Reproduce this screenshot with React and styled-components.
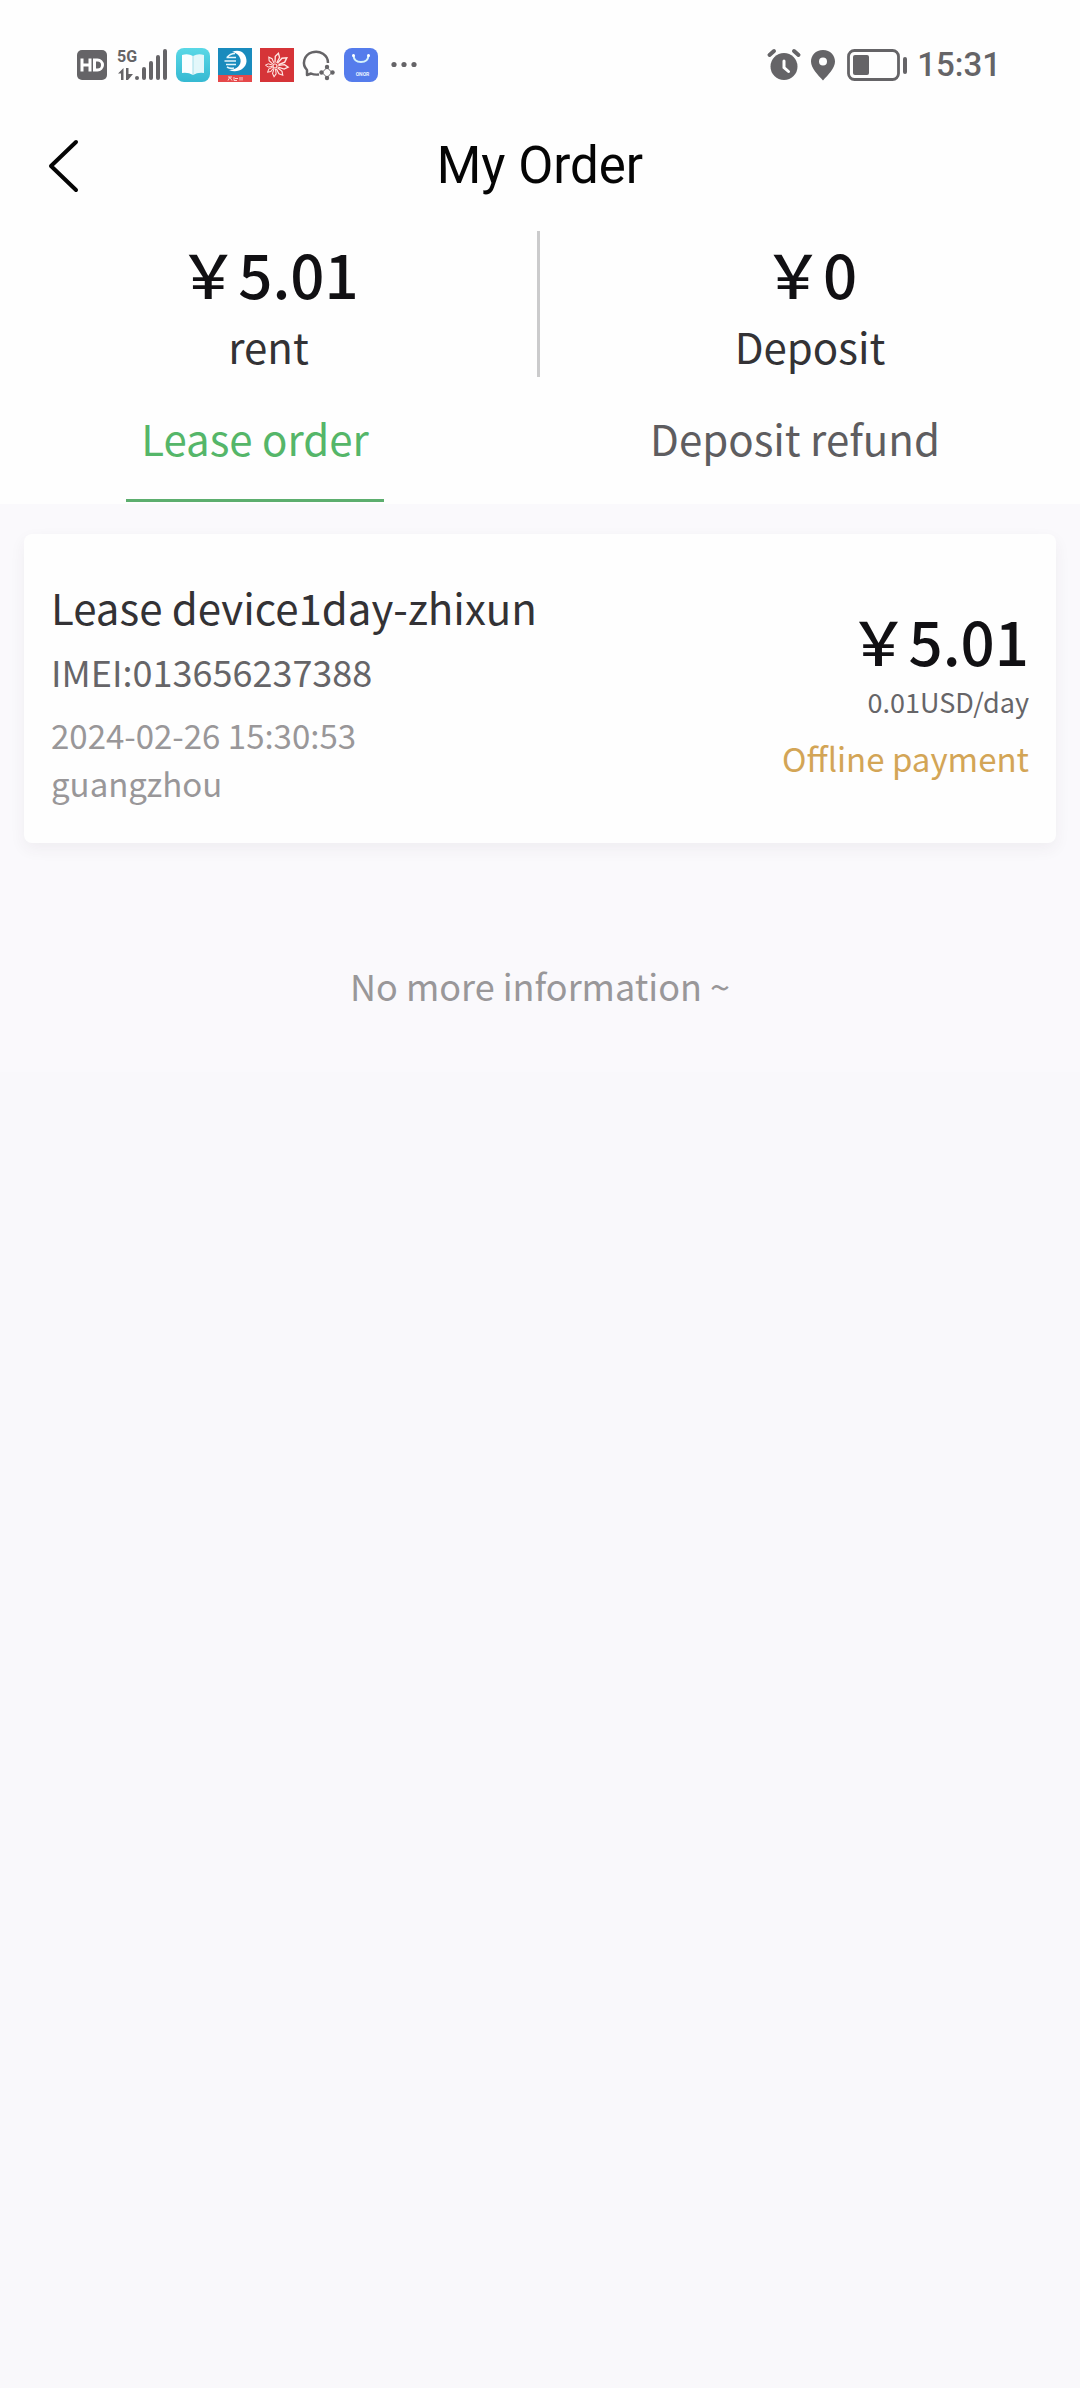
import React from 'react';
import styled, { createGlobalStyle } from 'styled-components';

const GlobalStyle = createGlobalStyle`
* {
box-sizing: border-box;
}
body {
margin: 0;
background: #f9f8fb;
font-family: 'Noto Sans CJK SC', 'Noto Sans', sans-serif;
}
`;

const Page = styled.main`
min-height: 100vh;
`;

const Top = styled.header`
background: #fefefe;
`;

const StatusBar = styled.div`
display: flex;
align-items: center;
justify-content: space-between;
height: 128px;
padding: 2px 79px 0 77px;
color: #656467;
`;

const StatusGroup = styled.div`
display: flex;
align-items: center;
gap: ${props => props.$gap};
`;

const Icon = styled.svg`
display: block;
flex: none;
overflow: visible;
`;

const Clock = styled.time`
font-family: Roboto, sans-serif;
font-size: 33px;
font-weight: 500;
line-height: 40px;
`;

const NavBar = styled.div`
display: grid;
grid-template-columns: 120px 1fr 120px;
align-items: center;
height: 74px;
`;

const BackButton = styled.button`
display: flex;
padding: 12px 0 12px 48px;
background: transparent;
border-style: none;
color: #050505;
`;

const Title = styled.h1`
margin: 0;
color: #050505;
font-family: Roboto, sans-serif;
font-size: 51px;
font-weight: normal;
line-height: 72px;
text-align: center;
`;

const Summary = styled.section`
display: grid;
grid-template-columns: 1fr 1fr;
padding-top: 29px;
`;

const SummaryItem = styled.div`
display: flex;
flex-direction: column;
align-items: center;
height: 146px;
border-right: ${props => (props.$divided ? '3px solid #cbcbcc' : 'none')};
`;

const Amount = styled.strong`
color: #111013;
font-size: 60px;
font-weight: 500;
line-height: 84px;
`;

const SummaryLabel = styled.span`
color: #333235;
font-size: 42px;
line-height: 62px;
`;

const Tabs = styled.nav`
display: grid;
grid-template-columns: 1fr 1fr;
padding-bottom: 2px;
`;

const TabCell = styled.div`
display: flex;
justify-content: center;
padding-right: 30px;
`;

const TabButton = styled.button`
padding: 31px 15px;
background: transparent;
border: none;
border-bottom: 3px solid ${props => (props.$active ? '#5cae6e' : 'transparent')};
color: ${props => (props.$active ? '#55b669' : '#5e5d60')};
font-family: inherit;
font-size: 42px;
line-height: 60px;
`;

const OrderList = styled.section`
padding: 30px 24px 0;
background: #faf9fc;
`;

const OrderCard = styled.article`
display: flex;
justify-content: space-between;
padding: 48px 27px 36px;
background: #fefefe;
border-radius: 8px;
box-shadow: 0 6px 16px rgba(60, 50, 70, 0.06);
`;

const OrderInfo = styled.div`
display: flex;
flex-direction: column;
`;

const OrderName = styled.h2`
margin: 0;
color: #333235;
font-size: 42px;
font-weight: normal;
line-height: 50px;
`;

const OrderImei = styled.span`
margin-top: 14px;
color: #666568;
font-size: 36px;
line-height: 50px;
`;

const OrderMeta = styled.div`
margin-top: 15px;
color: #999799;
font-size: 33px;
line-height: 48px;
`;

const OrderPrice = styled.div`
display: flex;
flex-direction: column;
align-items: flex-end;
padding-top: 16px;
`;

const DayRate = styled.span`
color: #666568;
font-size: 27px;
line-height: 40px;
`;

const PayMethod = styled.span`
margin-top: 11px;
color: #d3a556;
font-size: 33px;
line-height: 50px;
`;

const EndNote = styled.p`
margin: 0;
padding: 117px 0 62px;
color: #999799;
font-size: 36px;
line-height: 50px;
text-align: center;
`;

const HdIcon = () => (
  <Icon width="33" height="30" viewBox="0 0 33 30">
    <rect width="30" height="30" rx="5" fill="currentColor" />
    <path d="M5 8.500v13M13 8.500v13M5 15h8" fill="none" stroke="#fff" strokeWidth="3" />
    <path d="M17.500 10h3a5 5 0 0 1 0 10h-3z" fill="none" stroke="#fff" strokeWidth="3" />
  </Icon>
);

const SignalIcon = () => (
  <Icon width="50" height="32" viewBox="0 0 50 32" fill="currentColor">
    <text x="-1" y="13" fontFamily="Roboto, sans-serif" fontSize="16" fontWeight="bold">5G</text>
    <path d="M0 24.500l5.500-5.500v12H3v-6.500zM8 19h2.500v6H15l-5 6H8z" />
    <rect x="17" y="27" width="4" height="4" rx="2" />
    <rect x="24" y="18" width="4" height="13" rx="2" />
    <rect x="31" y="12" width="4" height="19" rx="2" />
    <rect x="38" y="6" width="4" height="25" rx="2" />
    <rect x="45" y="0" width="4" height="31" rx="2" />
  </Icon>
);

const BookIcon = () => (
  <Icon width="34" height="34" viewBox="0 0 34 34">
    <defs>
      <linearGradient id="book" x1="0" y1="0" x2="0" y2="1">
        <stop offset="0" stopColor="#5ad8e6" />
        <stop offset="1" stopColor="#35b9d2" />
      </linearGradient>
    </defs>
    <rect width="34" height="34" rx="8" fill="url(#book)" />
    <path d="M6 7q6-2 11 1v19q-5-3-11-2z" fill="#fafeff" />
    <path d="M28 7q-6-2-11 1v19q5-3 11-2z" fill="#e3f7fa" />
    <path d="M17 8v19" stroke="#a5dfe9" strokeWidth="1" />
  </Icon>
);

const TelecomIcon = () => (
  <Icon width="34" height="34" viewBox="0 0 34 34">
    <rect width="34" height="34" fill="#198bbd" />
    <rect y="27" width="34" height="7" fill="#e5484a" />
    <path d="M14 4C22 0 29 6 28.500 13.500 28 21 19 25.500 11 22 19 21.500 23.500 17 22.500 11.500 21.500 7 18 4.500 14 4z" fill="#fff" />
    <path d="M17 5.500q-5 0-8 4M18 9.500H8.500M18 13H6.500M18 16.500H8M16 20q-4 1-7-1" fill="none" stroke="#e4f5fb" strokeWidth="1.600" />
    <path d="M10 29h4M12 29l-2 3.500M12 29.500l2 3M16 29v3.500h3M17 30.500h3M22 29v3.500M24 29v3.500" fill="none" stroke="#ffd2cf" strokeWidth="1" />
  </Icon>
);

const FlowerIcon = () => (
  <Icon width="34" height="34" viewBox="0 0 34 34">
    <rect width="34" height="34" fill="#d63438" />
    <g transform="translate(15 18)" fill="none" stroke="#ffe6e2" strokeWidth="1.200">
      <circle r="2" />
      {[[15, 1.1], [55, 1.2], [95, 1.1], [140, 1], [185, 0.9], [230, 0.8], [275, 0.8], [325, 0.9]].map(([angle, size]) => (
        <path key={angle} transform={`rotate(${angle}) scale(${size})`} d="M-.800-3L-2-8.500 0-12 2-8.500 .800-3" />
      ))}
    </g>
  </Icon>
);

const ChatIcon = () => (
  <Icon width="34" height="34" viewBox="0 0 34 34" fill="none" stroke="currentColor">
    <path d="M26 15A12 11 0 1 0 5 22L5 27 9 25.500Q12 27 17 26.500" strokeWidth="2.500" strokeLinejoin="round" />
    <path d="M25 19.500l5 5-5 5-5-5z" strokeWidth="1" />
    <g fill="currentColor" stroke="none">
      <circle cx="25" cy="19" r="2.200" />
      <circle cx="30.500" cy="24.500" r="2.200" />
      <circle cx="25" cy="30" r="2.200" />
      <circle cx="19.500" cy="24.500" r="2.200" />
    </g>
  </Icon>
);

const StoreIcon = () => (
  <Icon width="34" height="34" viewBox="0 0 34 34">
    <rect width="34" height="34" rx="8" fill="#557cec" />
    <path d="M9.500 7.500Q10 14 17 14t7.500-6.500" fill="none" stroke="#d4f2fb" strokeWidth="2" strokeLinecap="round" />
    <circle cx="9.500" cy="7.500" r="1.500" fill="#fff" />
    <circle cx="24.500" cy="7.500" r="1.500" fill="#fff" />
    <text x="18.500" y="28" fill="#e9f1ff" fontFamily="Roboto, sans-serif" fontSize="5" fontWeight="bold" textAnchor="middle">ONOR</text>
  </Icon>
);

const MoreIcon = () => (
  <Icon width="34" height="34" viewBox="0 0 34 34" fill="currentColor">
    <circle cx="8" cy="16.500" r="2.600" />
    <circle cx="18" cy="16.500" r="2.600" />
    <circle cx="28" cy="16.500" r="2.600" />
  </Icon>
);

const AlarmIcon = () => (
  <Icon width="32" height="32" viewBox="0 0 32 32">
    <circle cx="15" cy="17.500" r="13.500" fill="currentColor" />
    <path d="M.500 6L5 2M29.500 6L25 2" stroke="currentColor" strokeWidth="4" strokeLinecap="round" />
    <path d="M15 12v6.500l4.500 4" fill="none" stroke="#fff" strokeWidth="3" strokeLinecap="round" />
  </Icon>
);

const PinIcon = () => (
  <Icon width="26" height="32" viewBox="0 0 26 32">
    <path fillRule="evenodd" fill="currentColor" d="M12 1C4.500 1 0 6.500 0 12.500 0 19 7 26 12 31.500 17 26 24 19 24 12.500 24 6.500 19.500 1 12 1zM12 8.500a4 4 0 1 1 0 8 4 4 0 0 1 0-8z" />
  </Icon>
);

const BatteryIcon = () => (
  <Icon width="60" height="32" viewBox="0 0 60 32">
    <rect x="1.500" y="1.500" width="50" height="29" rx="6" fill="none" stroke="currentColor" strokeWidth="2.800" />
    <rect x="6" y="6" width="16" height="20" rx="2" fill="currentColor" />
    <rect x="56" y="8" width="4" height="17" rx="2" fill="currentColor" />
  </Icon>
);

// full-width yen sign
const YEN = '\uffe5';

const orders = [
  {
    name: 'Lease device1day-zhixun',
    imei: '013656237388',
    date: '2024-02-26 15:30:53',
    city: 'guangzhou',
    price: '5.01',
    rate: '0.01USD/day',
    method: 'Offline payment',
  },
];

const Order = (props) => {
  const { order } = props;
  return (
    <OrderCard>
      <OrderInfo>
        <OrderName>{order.name}</OrderName>
        <OrderImei>{`IMEI:${order.imei}`}</OrderImei>
        <OrderMeta>
          <div>{order.date}</div>
          <div>{order.city}</div>
        </OrderMeta>
      </OrderInfo>
      <OrderPrice>
        <Amount>{`${YEN}${order.price}`}</Amount>
        <DayRate>{order.rate}</DayRate>
        <PayMethod>{order.method}</PayMethod>
      </OrderPrice>
    </OrderCard>
  );
};

const App = () => {
  const [tab, setTab] = React.useState('Lease order');
  return (
    <Page>
      <GlobalStyle />
      <Top>
        <StatusBar>
          <StatusGroup $gap="8px">
            <HdIcon />
            <SignalIcon />
            <BookIcon />
            <TelecomIcon />
            <FlowerIcon />
            <ChatIcon />
            <StoreIcon />
            <MoreIcon />
          </StatusGroup>
          <StatusGroup $gap="10px">
            <AlarmIcon />
            <PinIcon />
            <BatteryIcon />
            <Clock>15:31</Clock>
          </StatusGroup>
        </StatusBar>
        <NavBar>
          <BackButton type="button" aria-label="Back">
            <Icon width="32" height="52" viewBox="0 0 32 52" fill="none" stroke="currentColor" strokeWidth="4" strokeLinecap="round" strokeLinejoin="round">
              <path d="M28 2L3 26l25 24" />
            </Icon>
          </BackButton>
          <Title>My Order</Title>
        </NavBar>
        <Summary>
          <SummaryItem $divided>
            <Amount>{`${YEN}5.01`}</Amount>
            <SummaryLabel>rent</SummaryLabel>
          </SummaryItem>
          <SummaryItem>
            <Amount>{`${YEN}0`}</Amount>
            <SummaryLabel>Deposit</SummaryLabel>
          </SummaryItem>
        </Summary>
        <Tabs>
          {['Lease order', 'Deposit refund'].map(name => (
            <TabCell key={name}>
              <TabButton type="button" $active={tab === name} onClick={() => setTab(name)}>
                {name}
              </TabButton>
            </TabCell>
          ))}
        </Tabs>
      </Top>
      <OrderList>
        {orders.map(order => <Order key={order.imei} order={order} />)}
        <EndNote>No more information ~</EndNote>
      </OrderList>
    </Page>
  );
};

export default App;
